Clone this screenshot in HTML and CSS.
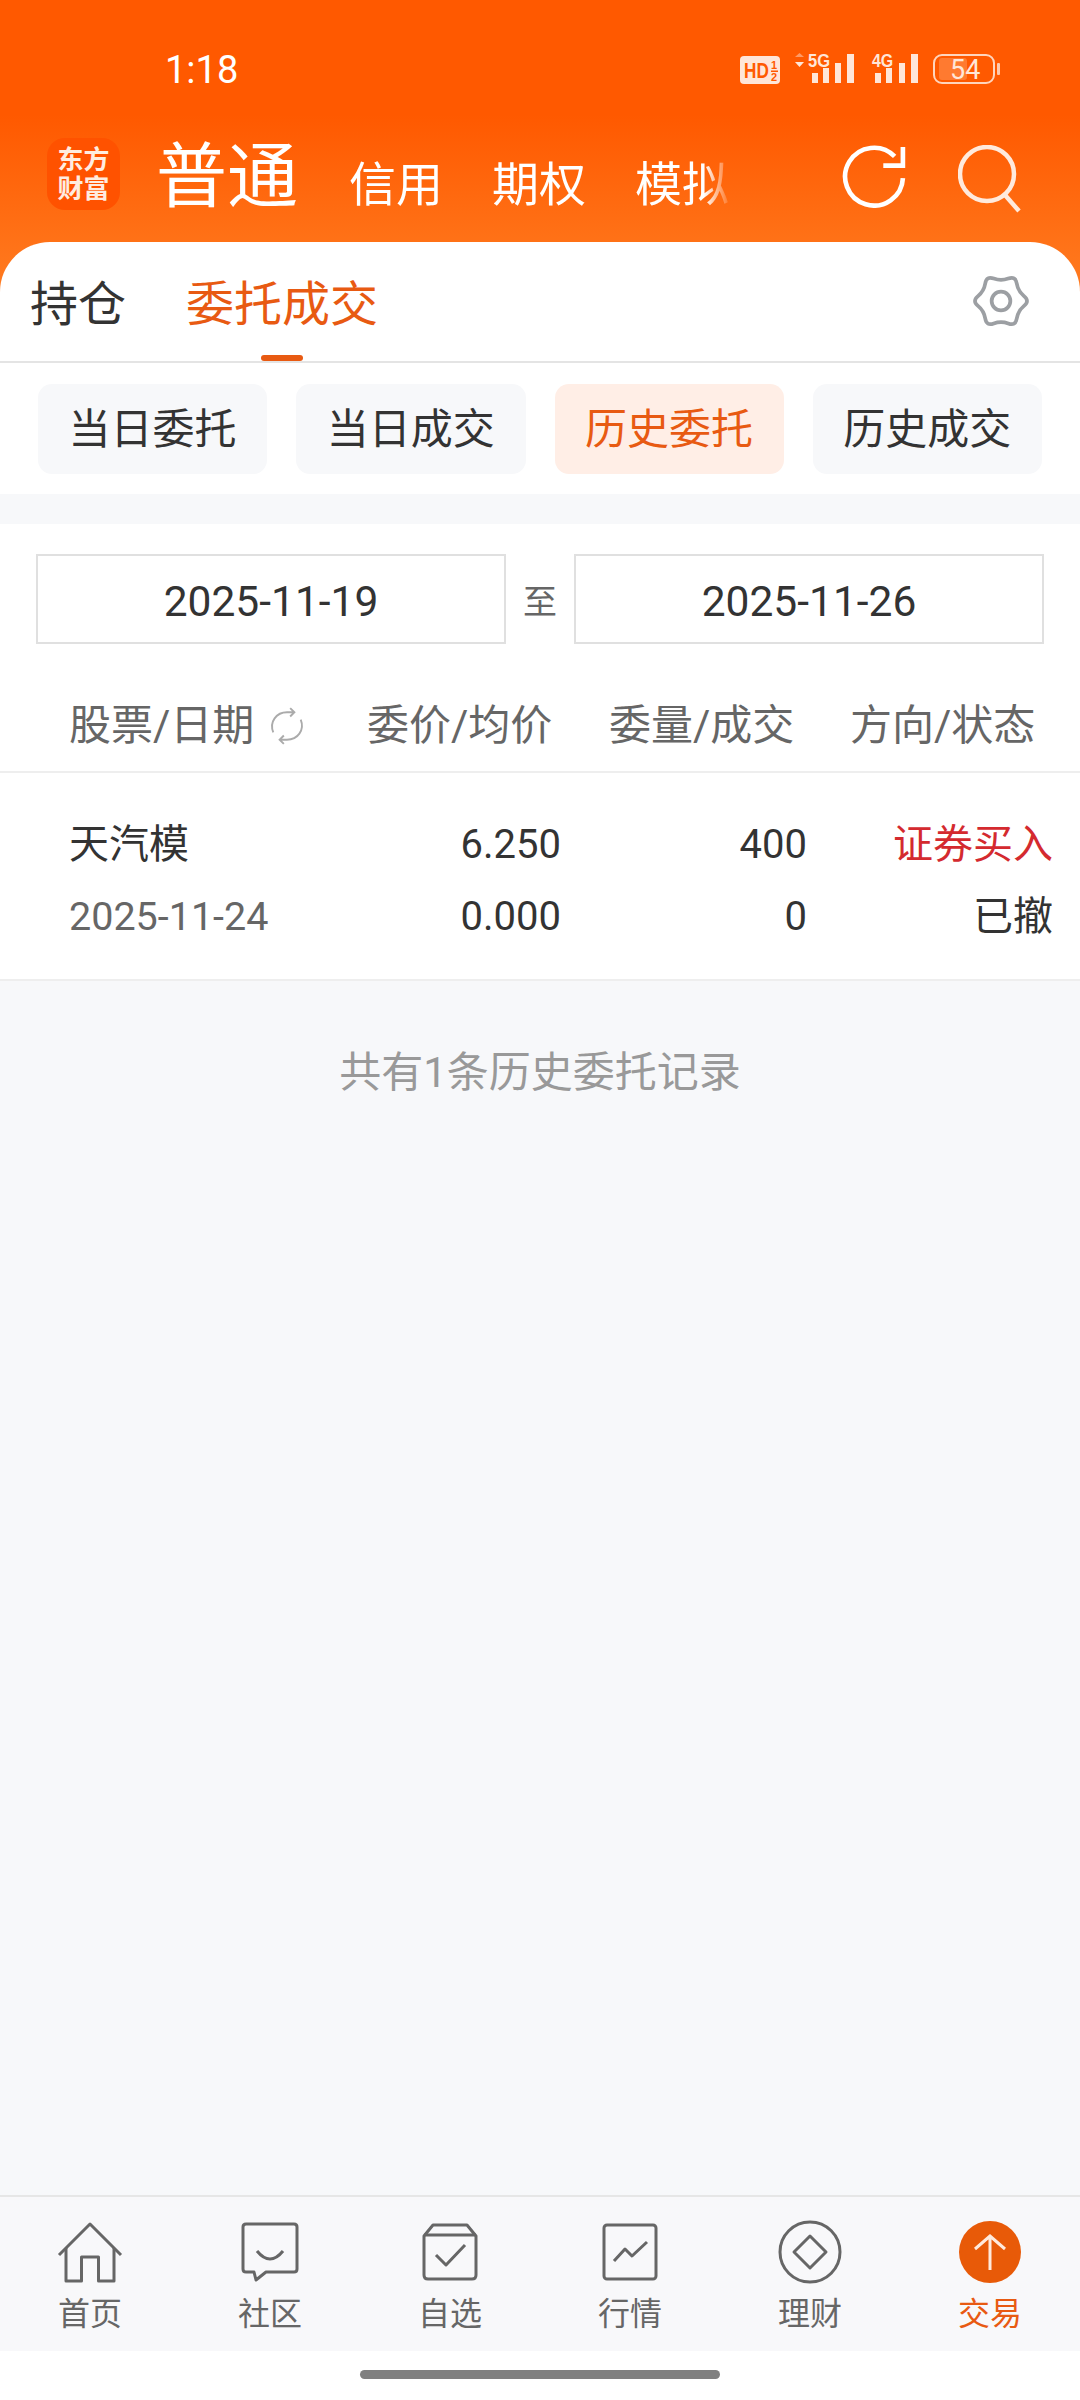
FILE: index.html
```html
<!DOCTYPE html>
<html>
<head>
    <title>历史委托</title>
    <meta charset="utf-8">
    <link rel="stylesheet" href="styles.css">
</head>
<body>
    <div class="top">
        <div class="status">
            <span class="time">1:18</span>
            <svg class="status-icons" width="262" height="42" viewBox="740 44 262 42">
                <rect x="741" y="56" width="40" height="28" rx="4" fill="#ffe6d8"/>
                <text class="hd" transform="translate(745 78) scale(.78 1)">HD</text>
                <text x="772" y="69" class="hd-small">1</text>
                <rect x="772" y="70.5" width="7" height="1.5" fill="#ff5900"/>
                <text x="772" y="81" class="hd-small">2</text>
                <path d="M796 57 L800.5 53 L805 57Z" fill="#ff9a66"/>
                <path d="M796 62 L800.5 67 L805 62Z" fill="#ffe6d8"/>
                <text class="net" transform="translate(809 67) scale(.87 1)">5G</text>
                <g fill="#ffe6d8">
                    <rect x="813" y="73" width="6" height="10"/>
                    <rect x="824" y="68" width="6" height="15"/>
                    <rect x="836" y="63" width="6" height="20"/>
                    <rect x="848" y="54" width="7" height="29"/>
                </g>
                <text class="net" transform="translate(873 67) scale(.84 1)">4G</text>
                <g fill="#ffe6d8">
                    <rect x="876" y="73" width="6" height="10"/>
                    <rect x="887" y="68" width="6" height="15"/>
                    <rect x="900" y="63" width="6" height="20"/>
                    <rect x="912" y="54" width="7" height="29"/>
                </g>
                <rect x="935" y="55" width="60" height="28" rx="8" fill="none" stroke="#ffd5bd" stroke-width="2"/>
                <rect x="940" y="58" width="28" height="22" rx="3" fill="#ff7a30"/>
                <rect x="998" y="63" width="3" height="12" rx="1" fill="#ffc9ab"/>
                <text x="951" y="79" class="batt">54</text>
            </svg>
        </div>

        <div class="title-row">
            <div class="logo">东方<br>财富</div>
            <div class="accounts">
                <span class="account-main">普通</span>
                <span class="account">信用</span>
                <span class="account">期权</span>
                <span class="account">模拟</span>
            </div>
            <svg class="refresh" width="64" height="64" viewBox="0 0 62 62" fill="none" stroke="#fff" stroke-width="4.5">
                <path d="M51 12 A28 28 0 1 0 59 33"/>
                <path d="M59 3 V21 H40"/>
            </svg>
            <svg class="search" width="64" height="68" viewBox="0 0 64 68" fill="none" stroke="#ffeadd" stroke-width="4.5">
                <circle cx="29" cy="29" r="27"/>
                <path d="M47 50 L61 66"/>
            </svg>
        </div>

        <div class="tabs">
            <span class="tab">持仓</span>
            <span class="tab tab-active">委托成交</span>
            <svg class="gear" width="58" height="58" viewBox="-1 -1 62 62" fill="none" stroke="#9c9fa3" stroke-width="4" stroke-linejoin="round">
                <path d="M22.25 6.08 Q30 9 37.75 6.08 Q45.5 3.15 46.85 11.33 Q48.2 19.5 54.6 24.75 Q61 30 54.6 35.25 Q48.2 40.5 46.85 48.67 Q45.5 56.85 37.75 53.92 Q30 51 22.25 53.92 Q14.5 56.85 13.15 48.67 Q11.8 40.5 5.4 35.25 Q-1 30 5.4 24.75 Q11.8 19.5 13.15 11.33 Q14.5 3.15 22.25 6.08Z"/>
                <circle cx="30" cy="30" r="10"/>
            </svg>
        </div>
    </div>

    <div class="chips">
        <span class="chip">当日委托</span>
        <span class="chip">当日成交</span>
        <span class="chip chip-active">历史委托</span>
        <span class="chip">历史成交</span>
    </div>

    <div class="section">
        <div class="dates">
            <div class="date-box">2025-11-19</div>
            <span class="date-to">至</span>
            <div class="date-box">2025-11-26</div>
        </div>

        <div class="table-head">
            <span class="head-first">股票/日期
                <svg class="swap" width="40" height="38" viewBox="0 0 36 36" fill="none" stroke="#ababab" stroke-width="1.8">
                    <path d="M5 24 C1 14 8 5 18 5 H25 M21 1 L25 5 L21 9"/>
                    <path d="M31 12 C35 22 28 31 18 31 H11 M15 27 L11 31 L15 35"/>
                </svg>
            </span>
            <span>委价/均价</span>
            <span>委量/成交</span>
            <span>方向/状态</span>
        </div>

        <div class="table-row">
            <span class="cell-name">天汽模</span>
            <span class="cell">6.250</span>
            <span class="cell">400</span>
            <span class="cell cell-buy">证券买入</span>
            <span class="cell-date">2025-11-24</span>
            <span class="cell">0.000</span>
            <span class="cell">0</span>
            <span class="cell">已撤</span>
        </div>
    </div>

    <div class="content">共有1条历史委托记录</div>

    <div class="nav">
        <div class="nav-item">
            <div class="nav-icon">
                <svg width="66" height="62" viewBox="-1 -1 66 62" fill="none" stroke="#666" stroke-width="3" stroke-linejoin="round">
                    <path d="M1 33 L32 2 L63 33"/>
                    <path d="M8 26 V59 H23.5 V35 H40.5 V59 H56 V26"/>
                </svg>
            </div>
            <span>首页</span>
        </div>
        <div class="nav-item">
            <div class="nav-icon">
                <svg width="58" height="60" viewBox="-1 -1 58 60" fill="none" stroke="#666" stroke-width="3" stroke-linejoin="round">
                    <path d="M4 1 H52 Q55 1 55 4 V46 Q55 49 52 49 H24 L14 57 L12 49 H4 Q1 49 1 46 V4 Q1 1 4 1Z"/>
                    <path d="M15 28 Q28 44 41 28"/>
                </svg>
            </div>
            <span>社区</span>
        </div>
        <div class="nav-item">
            <div class="nav-icon">
                <svg width="56" height="58" viewBox="-1 -1 56 58" fill="none" stroke="#666" stroke-width="3" stroke-linejoin="round">
                    <path d="M1 12 L10 1 H44 L53 12 V51 Q53 55 49 55 H5 Q1 55 1 51Z"/>
                    <path d="M1 11 H53"/>
                    <path d="M13 31 L23 41 L42 21"/>
                </svg>
            </div>
            <span>自选</span>
        </div>
        <div class="nav-item">
            <div class="nav-icon">
                <svg width="56" height="58" viewBox="-1 -1 56 58" fill="none" stroke="#666" stroke-width="3" stroke-linejoin="round">
                    <rect x="1" y="1" width="52" height="54" rx="3"/>
                    <path d="M11 37 L22 25 L29 32 L44 18"/>
                </svg>
            </div>
            <span>行情</span>
        </div>
        <div class="nav-item">
            <div class="nav-icon">
                <svg width="64" height="66" viewBox="0 0 64 66" fill="none" stroke="#666" stroke-width="3" stroke-linejoin="round">
                    <circle cx="32" cy="33" r="30"/>
                    <path d="M32 17 L48 33 L32 49 L16 33Z"/>
                </svg>
            </div>
            <span>理财</span>
        </div>
        <div class="nav-item nav-active">
            <div class="nav-icon">
                <svg width="64" height="64" viewBox="0 0 64 64" fill="none" stroke="#ffeadd" stroke-width="3">
                    <circle cx="32" cy="32" r="31" fill="#e85a08" stroke="none"/>
                    <path d="M32 16 V50 M17 29 L32 16 L47 29"/>
                </svg>
            </div>
            <span>交易</span>
        </div>
    </div>

    <div class="gesture">
        <div class="gesture-bar"></div>
    </div>
</body>
</html>
```

FILE: styles.css
```css
body {
    margin: 0;
    width: 1080px;
    height: 2400px;
    display: flex;
    flex-direction: column;
    background-color: #f7f8fa;
    font-family: Roboto, "Noto Sans CJK SC", sans-serif;
    color: #333;
}

/* Cabecera naranja */
.top {
    background: linear-gradient(#ff5900 0, #ff5900 115px, #ff7b20 290px);
}

.status {
    height: 138px;
    display: flex;
    justify-content: space-between;
    align-items: flex-start;
    padding: 44px 79px 0 165px;
    box-sizing: border-box;
}

.time {
    color: #fff;
    font-size: 38px;
    line-height: 36px;
    margin-top: 8px;
}

.status-icons {
    display: block;
}

.hd {
    font-family: "Liberation Sans", sans-serif;
    font-size: 22px;
    font-weight: bold;
    fill: #ff5900;
}

.hd-small {
    font-family: "Liberation Sans", sans-serif;
    font-size: 11px;
    font-weight: bold;
    fill: #ff5900;
}

.net {
    font-family: "Liberation Sans", sans-serif;
    font-size: 19px;
    font-weight: bold;
    fill: #ffe6d8;
}

.batt {
    font-family: Roboto, sans-serif;
    font-size: 27px;
    fill: #ffe6d8;
}

.title-row {
    height: 104px;
    display: flex;
    align-items: flex-start;
    padding-left: 47px;
}

.logo {
    width: 73px;
    height: 72px;
    background-color: #ff5200;
    border-radius: 18px;
    color: #ffece0;
    font-size: 26px;
    font-weight: bold;
    line-height: 29px;
    text-align: center;
    padding-top: 8px;
    box-sizing: border-box;
}

.accounts {
    width: 686px;
    height: 92px;
    padding-top: 4px;
    box-sizing: border-box;
    margin-left: 36px;
    display: flex;
    align-items: baseline;
    gap: 49px;
    color: #fff;
    font-size: 47px;
    line-height: 70px;
    mask-image: linear-gradient(to right, #000 548px, transparent 576px);
}

.account-main {
    font-size: 71px;
    margin-right: 2px;
}

.refresh {
    margin-top: 6px;
}

.search {
    margin-left: 52px;
    margin-top: 7px;
}

.tabs {
    height: 121px;
    background-color: #fff;
    border-radius: 50px 50px 0 0;
    border-bottom: 2px solid #e4e4e4;
    box-sizing: border-box;
    display: flex;
    align-items: flex-start;
    padding: 30px 50px 0 30px;
    font-size: 48px;
    line-height: 66px;
}

.tab {
    margin-right: 60px;
    position: relative;
    height: 89px;
}

.tab-active {
    color: #e85a12;
}

.tab-active::after {
    content: "";
    position: absolute;
    left: 75px;
    bottom: 0;
    width: 42px;
    height: 6px;
    border-radius: 3px;
    background-color: #e85a12;
}

.gear {
    margin-left: auto;
}

.chips {
    background-color: #fff;
    display: flex;
    gap: 29px;
    padding: 21px 38px 20px;
}

.chip {
    flex: 1;
    height: 90px;
    line-height: 92px;
    text-align: center;
    font-size: 42px;
    background-color: #f7f8fa;
    border-radius: 14px;
}

.chip-active {
    background-color: #ffeee6;
    color: #e85a12;
}

.section {
    margin-top: 30px;
    background-color: #fff;
    padding-top: 30px;
}

.dates {
    display: flex;
    align-items: center;
    padding: 0 36px;
}

.date-box {
    flex: 1;
    height: 90px;
    line-height: 92px;
    border: 2px solid #e0e0e0;
    box-sizing: border-box;
    text-align: center;
    font-size: 42.5px;
}

.date-to {
    width: 68px;
    text-align: center;
    font-size: 34px;
    color: #666;
}

.table-head {
    display: grid;
    grid-template-columns: 298px 242px 241px 242px;
    padding: 57px 0 20px 69px;
    border-bottom: 2px solid #eee;
    font-size: 42px;
    line-height: 50px;
    color: #666;
}

.head-first {
    display: flex;
    align-items: center;
    gap: 13px;
}

.table-row {
    display: grid;
    grid-template-columns: 300px 192px 246px 246px;
    padding: 36px 0 26px 69px;
    border-bottom: 2px solid #eee;
    font-size: 40px;
    line-height: 72px;
}

.cell {
    text-align: right;
}

.cell-buy {
    color: #d42a2f;
}

.cell-date {
    color: #666;
    font-size: 39.5px;
}

.content {
    flex: 1;
    padding-top: 62px;
    text-align: center;
    font-size: 42px;
    line-height: 60px;
    color: #999;
}

/* Barra inferior */
.nav {
    height: 156px;
    display: grid;
    grid-template-columns: repeat(6, 180px);
    background-color: #f8f8fa;
    border-top: 2px solid #e6e6e6;
    box-sizing: border-box;
    font-size: 32px;
    color: #666;
    text-align: center;
}

.nav-item {
    display: flex;
    flex-direction: column;
    align-items: center;
}

.nav-icon {
    height: 66px;
    margin-top: 22px;
    display: flex;
    align-items: center;
}

.nav-icon svg {
    display: block;
}

.nav-item span {
    line-height: 40px;
    margin-top: 9px;
}

.nav-active {
    color: #e85a12;
}

.gesture {
    height: 49px;
    background-color: #fff;
    padding-top: 19px;
    box-sizing: border-box;
}

.gesture-bar {
    width: 360px;
    height: 9px;
    margin: 0 auto;
    border-radius: 5px;
    background-color: #808080;
}
```
